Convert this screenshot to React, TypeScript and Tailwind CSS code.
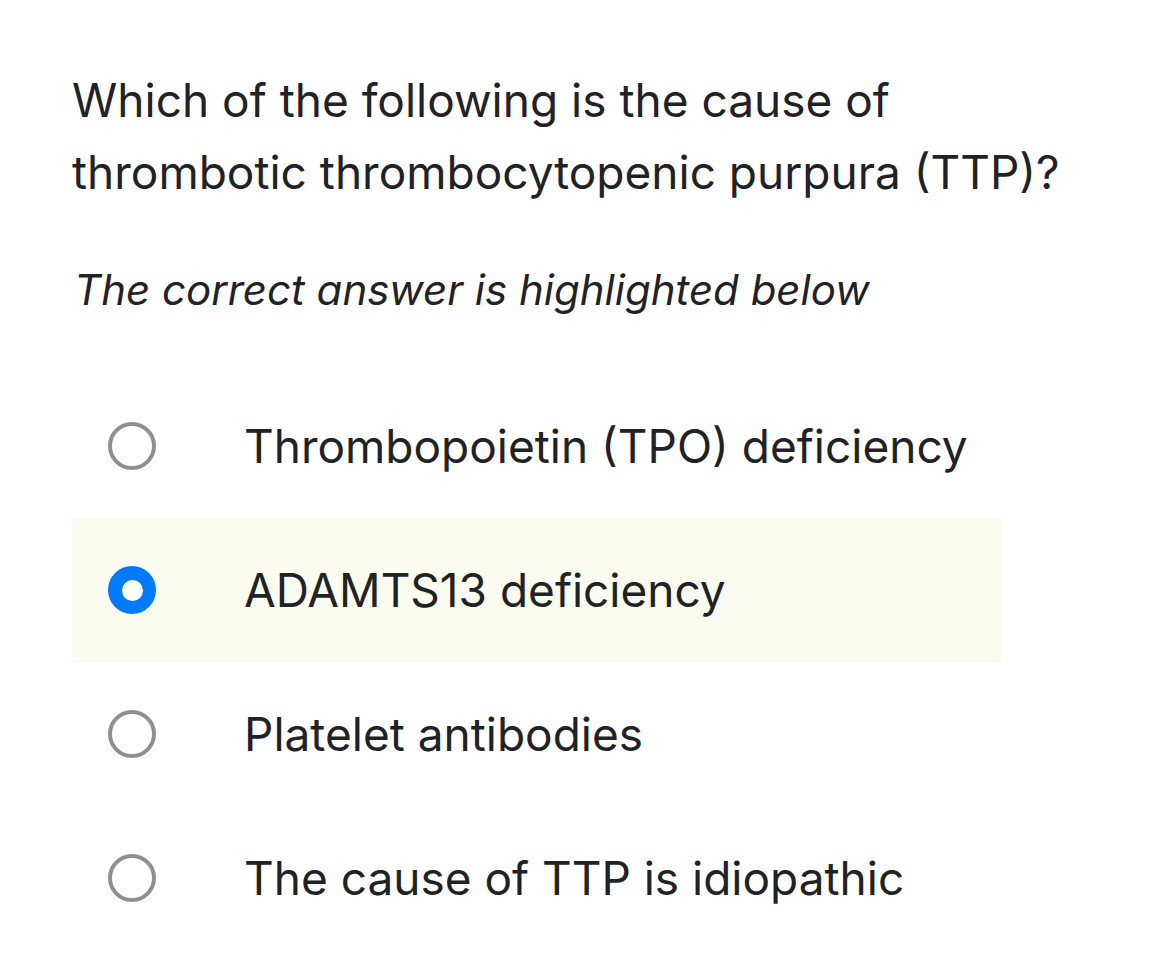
import React from "react";

const options = [
  { text: "Thrombopoietin (TPO) deficiency", selected: false },
  { text: "ADAMTS13 deficiency", selected: true },
  { text: "Platelet antibodies", selected: false },
  { text: "The cause of TTP is idiopathic", selected: false },
];

export default function App() {
  return (
    <div
      className="w-[1166px] h-[956px] bg-white text-[#1f2226] pl-[72px] pt-[64px]"
      style={{ fontFamily: "Inter, 'Noto Sans', sans-serif" }}
    >
      <h1 className="text-[46px] leading-[72px] font-normal w-[1040px]">
        Which of the following is the cause of
        <br />
        thrombotic thrombocytopenic purpura (TTP)?
      </h1>
      <p className="mt-[56px] text-[42px] leading-[52px] italic pl-[2px]">
        The correct answer is highlighted below
      </p>
      <div className="mt-[58px] w-[930px] flex flex-col">
        {options.map((o, i) => (
          <div
            key={i}
            className={
              "h-[144px] flex items-center pl-[36px] " +
              (o.selected ? "bg-[#fbfbef]" : "")
            }
          >
            {o.selected ? (
              <div className="w-[48px] h-[48px] rounded-full bg-[#007aff] flex items-center justify-center shrink-0">
                <div className="w-[21px] h-[21px] rounded-full bg-white" />
              </div>
            ) : (
              <div className="w-[48px] h-[48px] rounded-full border-[4px] border-[#8e8e93] shrink-0" />
            )}
            <span className="ml-[88px] text-[46px] leading-[56px]">{o.text}</span>
          </div>
        ))}
      </div>
    </div>
  );
}
